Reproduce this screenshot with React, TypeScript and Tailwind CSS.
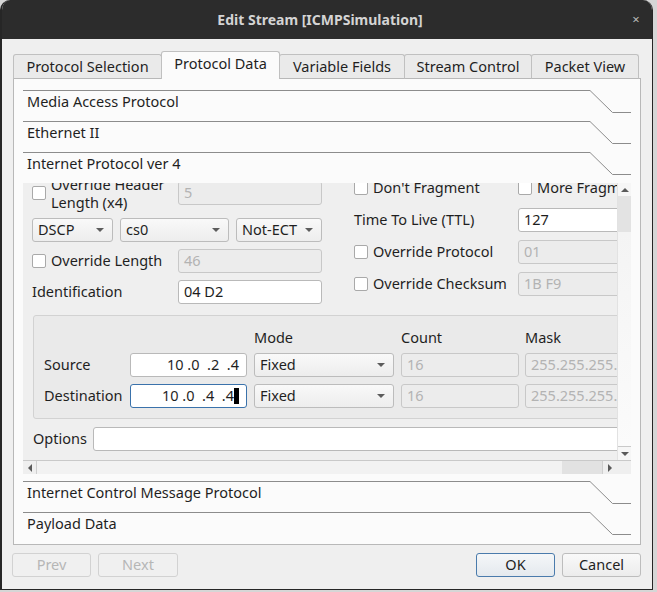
import React from 'react';

const tabs = [
  { label: 'Protocol Selection', w: 'w-[149px]' },
  { label: 'Protocol Data', w: 'w-[119px]', active: true },
  { label: 'Variable Fields', w: 'w-[126px]' },
  { label: 'Stream Control', w: 'w-[128px]' },
  { label: 'Packet View', w: 'w-[108px]' },
];

function Checkbox() {
  return <span className="inline-block w-[14px] h-[14px] shrink-0 rounded-[2px] border border-[#a9a9a9] bg-white" />;
}

function Field({ value, disabled, className = '' }: { value: string; disabled?: boolean; className?: string }) {
  return (
    <div
      className={`h-[24px] shrink-0 flex items-center px-[5px] rounded-[3px] border overflow-hidden whitespace-nowrap ${
        disabled ? 'border-[#c8c8c8] bg-[#ececec] text-[#b3b3b3]' : 'border-[#b9b9b9] bg-white text-[#1d1d1d]'
      } ${className}`}
    >
      {value}
    </div>
  );
}

function Combo({ value, className = '' }: { value: string; className?: string }) {
  return (
    <div
      className={`h-[24px] shrink-0 flex items-center justify-between pl-[5px] pr-[8px] rounded-[3px] border border-[#bcbcbc] bg-gradient-to-b from-[#f9f9f9] to-[#ededed] ${className}`}
    >
      <span>{value}</span>
      <svg width="8" height="4" viewBox="0 0 8 4">
        <path d="M0 0h8L4 4z" fill="#5c5c5c" />
      </svg>
    </div>
  );
}

function SectionHeader({ title }: { title: string }) {
  return (
    <div className="flex h-[31px] shrink-0">
      <div className="flex-1 border-t border-[#8c8c8c] pl-[4px] leading-[20px]">{title}</div>
      <svg width="41" height="31" className="shrink-0">
        <path d="M0 0.5 L22.5 22.5 H41" stroke="#8c8c8c" strokeWidth="1" fill="none" />
      </svg>
    </div>
  );
}

function IpField({ value, focused }: { value: string; focused?: boolean }) {
  return (
    <div
      className={`h-[24px] w-[117px] shrink-0 flex items-center justify-end pr-[7px] rounded-[3px] border bg-white whitespace-pre ${
        focused ? 'border-[#3a72ab]' : 'border-[#b9b9b9]'
      }`}
    >
      <span>{value}</span>
      {focused && <span className="inline-block w-[5px] h-[16px] bg-black" />}
    </div>
  );
}

function ScrollArrow({ dir }: { dir: 'up' | 'down' | 'left' | 'right' }) {
  const d = {
    up: 'M0 4h8L4 0z',
    down: 'M0 0h8L4 4z',
    left: 'M4 0v8L0 4z',
    right: 'M0 0v8L4 4z',
  }[dir];
  const vertical = dir === 'up' || dir === 'down';
  return (
    <svg width={vertical ? 8 : 4} height={vertical ? 4 : 8} viewBox={vertical ? '0 0 8 4' : '0 0 4 8'}>
      <path d={d} fill="#5a5a5a" />
    </svg>
  );
}

function IpContent() {
  return (
    <div className="-mt-[8px] pl-[9px] w-[700px]">
      <div className="flex items-start">
        {/* left column */}
        <div className="w-[290px] flex flex-col gap-[7px]">
          <div className="flex items-center h-[36px]">
            <div className="w-[146px] flex items-center gap-[5px]">
              <Checkbox />
              <div className="leading-[18px]">
                Override Header
                <br />
                Length (x4)
              </div>
            </div>
            <Field value="5" disabled className="w-[144px]" />
          </div>
          <div className="flex gap-[7px]">
            <Combo value="DSCP" className="w-[81px]" />
            <Combo value="cs0" className="w-[109px]" />
            <Combo value="Not-ECT" className="w-[86px]" />
          </div>
          <div className="flex items-center">
            <div className="w-[146px] flex items-center gap-[5px]">
              <Checkbox />
              <span>Override Length</span>
            </div>
            <Field value="46" disabled className="w-[144px]" />
          </div>
          <div className="flex items-center">
            <div className="w-[146px]">Identification</div>
            <Field value="04 D2" className="w-[144px]" />
          </div>
        </div>

        {/* right column */}
        <div className="ml-[32px] mt-[1px] flex flex-col gap-[8px]">
          <div className="flex items-center h-[24px]">
            <div className="w-[164px] flex items-center gap-[5px]">
              <Checkbox />
              <span>Don't Fragment</span>
            </div>
            <div className="flex items-center gap-[5px]">
              <Checkbox />
              <span>More Fragments</span>
            </div>
          </div>
          <div className="flex items-center">
            <div className="w-[164px]">Time To Live (TTL)</div>
            <Field value="127" className="w-[144px]" />
          </div>
          <div className="flex items-center">
            <div className="w-[164px] flex items-center gap-[5px]">
              <Checkbox />
              <span>Override Protocol</span>
            </div>
            <Field value="01" disabled className="w-[144px]" />
          </div>
          <div className="flex items-center">
            <div className="w-[164px] flex items-center gap-[5px]">
              <Checkbox />
              <span>Override Checksum</span>
            </div>
            <Field value="1B F9" disabled className="w-[144px]" />
          </div>
        </div>
      </div>

      {/* address group */}
      <div className="ml-[1px] mt-[11px] w-[640px] rounded-[3px] border border-[#d2d2d2] bg-[#eaeaea] pt-[12px] pb-[10px] pl-[10px]">
        <div className="flex h-[18px] items-center leading-[18px]">
          <div className="w-[86px]" />
          <div className="w-[124px]" />
          <div className="w-[147px]">Mode</div>
          <div className="w-[124px]">Count</div>
          <div>Mask</div>
        </div>
        <div className="mt-[7px] flex items-center gap-[7px]">
          <div className="w-[79px]">Source</div>
          <IpField value="10 .0  .2  .4" />
          <Combo value="Fixed" className="w-[140px]" />
          <Field value="16" disabled className="w-[118px]" />
          <Field value="255.255.255.0" disabled className="w-[140px] -ml-px" />
        </div>
        <div className="mt-[7px] flex items-center gap-[7px]">
          <div className="w-[79px]">Destination</div>
          <IpField value="10 .0  .4  .4" focused />
          <Combo value="Fixed" className="w-[140px]" />
          <Field value="16" disabled className="w-[118px]" />
          <Field value="255.255.255.0" disabled className="w-[140px] -ml-px" />
        </div>
      </div>

      <div className="mt-[8px] flex items-center">
        <div className="w-[61px] pl-[1px]">Options</div>
        <Field value="" className="w-[580px]" />
      </div>
    </div>
  );
}

export default function App() {
  return (
    <div className="w-[657px] h-[592px] flex items-start bg-[#d6d6d6] font-['Noto_Sans',sans-serif] text-[14.5px] text-[#1f1f1f] overflow-hidden">
      <div className="w-[653px] h-[590px] shrink-0 flex flex-col rounded-t-[10px] overflow-hidden border-l-2 border-r border-b border-[#262626] bg-[#efefef]">
        {/* title bar */}
        <div className="h-[39px] shrink-0 bg-[#2c2c2c] flex items-center">
          <div className="flex-1 text-center font-bold text-[14px] text-[#d4d4d4] pl-[14px]">Edit Stream [ICMPSimulation]</div>
          <div className="w-[28px] pr-[4px] text-center text-[#b9b9b9] text-[13px]">×</div>
        </div>

        {/* body */}
        <div className="flex-1 flex flex-col pt-[12px] pl-[11px] pr-[11px] pb-[12px]">
          <div className="flex items-end h-[28px] -mb-px relative z-10">
            {tabs.map((t, i) => (
              <div
                key={t.label}
                className={`${t.w} ${i > 0 ? '-ml-px' : ''} flex items-center justify-center border border-[#c0c0c0] rounded-t-[3px] ${
                  t.active ? 'h-[28px] bg-[#fbfbfb] border-b-0 pb-[3px]' : 'h-[25px] bg-[#eaeaea] border-b-[#b8b8b8]'
                }`}
              >
                {t.label}
              </div>
            ))}
          </div>

          <div className="h-[467px] shrink-0 border border-[#b8b8b8] bg-[#fbfbfb] pt-[11px] pl-[9px] pr-[9px] flex flex-col">
            <SectionHeader title="Media Access Protocol" />
            <SectionHeader title="Ethernet II" />
            <SectionHeader title="Internet Protocol ver 4" />

            <div className="h-[291px] shrink-0 flex flex-col bg-[#efefef]">
              <div className="flex h-[277px]">
                <div className="flex-1 overflow-hidden">
                  <IpContent />
                </div>
                {/* vertical scrollbar */}
                <div className="w-[14px] shrink-0 flex flex-col bg-[#f6f6f6] border-l border-[#e2e2e2]">
                  <div className="h-[13px] flex items-center justify-center">
                    <ScrollArrow dir="up" />
                  </div>
                  <div className="h-[36px] bg-[#e3e3e3]" />
                  <div className="flex-1 bg-gradient-to-b from-[#f4f4f4] to-[#fbfbfb]" />
                  <div className="h-[14px] flex items-center justify-center border-t border-[#c9c9c9]">
                    <ScrollArrow dir="down" />
                  </div>
                </div>
              </div>
              {/* horizontal scrollbar */}
              <div className="flex h-[14px] border-t border-[#c9c9c9]">
                <div className="w-[14px] flex items-center justify-center border-r border-[#cfcfcf]">
                  <ScrollArrow dir="left" />
                </div>
                <div className="flex-1 bg-[#f2f2f2]" />
                <div className="w-[41px] bg-[#e2e2e2] border-r border-[#cfcfcf]" />
                <div className="w-[14px] flex items-center justify-center">
                  <ScrollArrow dir="right" />
                </div>
                <div className="w-[14px] bg-[#efefef]" />
              </div>
            </div>

            <div className="mt-[7px]">
              <SectionHeader title="Internet Control Message Protocol" />
              <SectionHeader title="Payload Data" />
            </div>
          </div>

          {/* buttons */}
          <div className="mt-[8px] flex items-center -ml-px">
            <div className="w-[79px] h-[24px] flex items-center justify-center rounded-[3px] border border-[#d2d2d2] bg-[#f0f0f0] text-[#b6b6b6]">Prev</div>
            <div className="ml-[7px] w-[80px] h-[24px] flex items-center justify-center rounded-[3px] border border-[#d2d2d2] bg-[#f0f0f0] text-[#b6b6b6]">Next</div>
            <div className="flex-1" />
            <div className="w-[79px] h-[24px] flex items-center justify-center rounded-[3px] border border-[#4a7bac] bg-gradient-to-b from-[#f5f7f9] to-[#e4e9ee]">OK</div>
            <div className="ml-[7px] w-[79px] h-[24px] flex items-center justify-center rounded-[3px] border border-[#bdbdbd] bg-gradient-to-b from-[#f9f9f9] to-[#ececec]">Cancel</div>
          </div>
        </div>
      </div>
    </div>
  );
}
